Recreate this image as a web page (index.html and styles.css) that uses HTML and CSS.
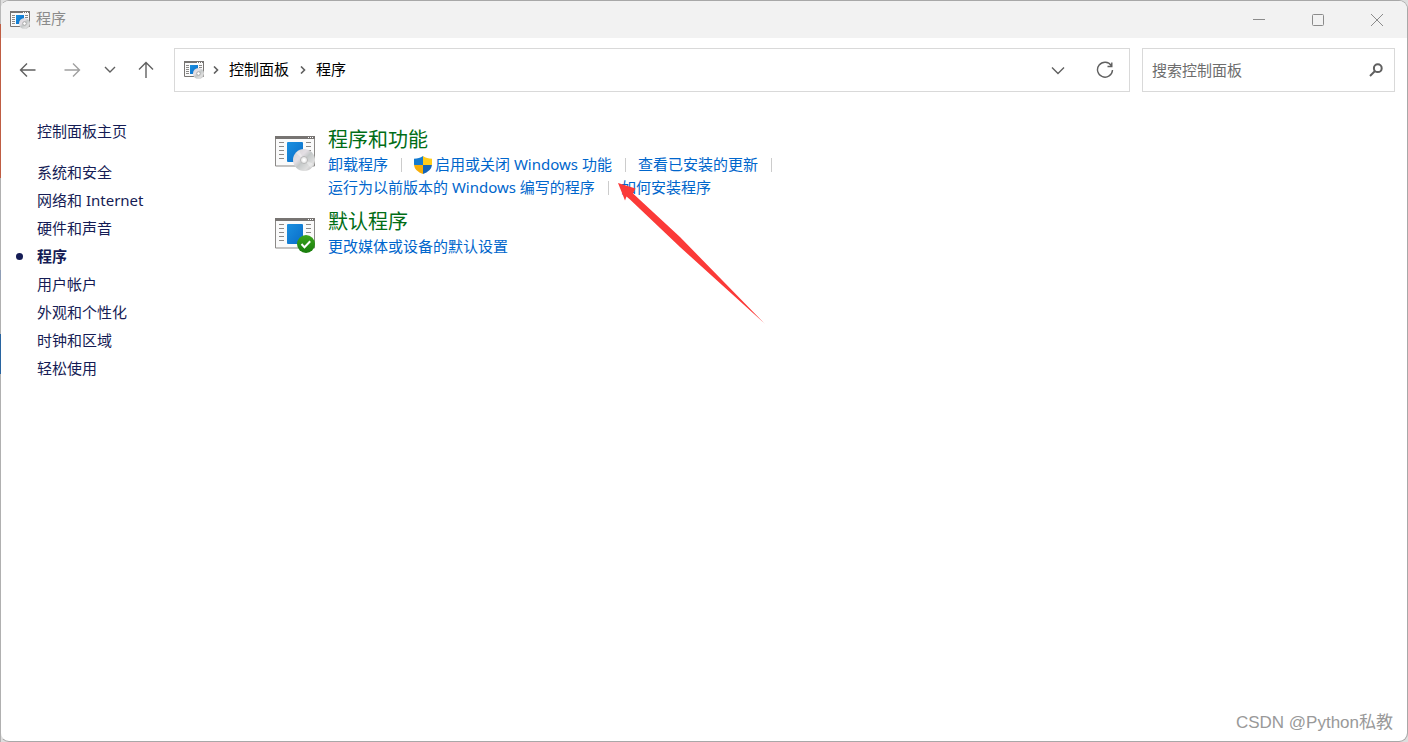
FILE: index.html
```html
<!DOCTYPE html>
<html lang="zh-CN">
<head>
<meta charset="utf-8">
<title>程序</title>
<link rel="stylesheet" href="styles.css">
</head>
<body>
<svg class="defs" aria-hidden="true">
  <defs>
    <linearGradient id="blue" x1="0" y1="0" x2="1" y2="1"><stop offset="0" stop-color="#1a90e0"/><stop offset="1" stop-color="#0a6cc8"/></linearGradient>
    <linearGradient id="disc" x1="0" y1="0" x2="1" y2="1"><stop offset="0" stop-color="#d2d2d2"/><stop offset=".35" stop-color="#e4dfe4"/><stop offset=".5" stop-color="#c4c8c8"/><stop offset=".75" stop-color="#dedede"/><stop offset="1" stop-color="#aaaaaa"/></linearGradient>
    <linearGradient id="green" x1="0" y1="0" x2="0" y2="1"><stop offset="0" stop-color="#3ba51c"/><stop offset="1" stop-color="#187c0c"/></linearGradient>
    <symbol id="panel" viewBox="0 0 40 36">
      <path d="M.5 1.500h39v28.500h-39z" fill="#fafafa" stroke="#8b8987"/>
      <path d="M0 0h40v3H0z" fill="#777472"/>
      <path d="M33 1.500h1M35 1.500h1M37 1.500h1" stroke="#fff"/>
      <path d="M4 6.500h5M4 10.500h5M4 14.500h5M4 18.500h5M4 22.500h5M31 6.500h5M31 10.500h5M31 14.500h5" stroke="#8b8987"/>
      <rect x="12" y="6" width="16" height="20" rx="1" fill="url(#blue)"/>
    </symbol>
    <symbol id="programs" viewBox="0 0 40 36">
      <use href="#panel" width="40" height="36"/>
      <circle cx="29" cy="24" r="11" fill="url(#disc)"/>
      <path d="M29 24 21 17l3-2.500zM29 24l7 8 3-4z" fill="#fff" opacity=".35"/>
      <circle cx="29" cy="24" r="3.500" fill="#eee" stroke="#b5b5b5"/>
      <circle cx="29" cy="24" r="1.500" fill="#fff"/>
    </symbol>
    <symbol id="programs-small" viewBox="0 0 20 18">
      <path d="M.5.500h19v15H.5z" fill="#fafafa" stroke="#777472"/>
      <path d="M0 1h20" stroke="#777472" stroke-width="2"/>
      <path d="M13 1.500h1M15 1.500h1M17 1.500h1" stroke="#fff"/>
      <path d="M2 4.500h3M2 6.500h3M2 8.500h3M2 10.500h3M2 12.500h3M15 4.500h3M15 6.500h3" stroke="#8b8987"/>
      <rect x="6" y="4" width="8" height="9" fill="url(#blue)"/>
      <circle cx="14.500" cy="12.500" r="5.500" fill="url(#disc)"/>
      <circle cx="14.500" cy="12.500" r="1.800" fill="#fff" stroke="#aaa"/>
    </symbol>
    <symbol id="defaults" viewBox="0 0 40 36">
      <use href="#panel" width="40" height="36"/>
      <circle cx="31" cy="26" r="9" fill="url(#green)"/>
      <path d="m26.500 26 3 3.300 5.700-6" fill="none" stroke="#fff" stroke-width="2"/>
    </symbol>
    <symbol id="shield" viewBox="0 0 18 18">
      <clipPath id="shield-clip"><path d="M9 0c2.500 1.800 5.500 2.700 9 2.700V8c0 5-4 8.200-9 10-5-1.800-9-5-9-10V2.700C3.500 2.700 6.500 1.800 9 0z"/></clipPath>
      <g clip-path="url(#shield-clip)">
        <path d="M0 0h9v9H0z" fill="#157bd0"/><path d="M9 0h9v9H9z" fill="#ffcc1c"/>
        <path d="M0 9h9v9H0z" fill="#f8ae08"/><path d="M9 9h9v9H9z" fill="#1464b8"/>
      </g>
    </symbol>
  </defs>
</svg>

<div class="window">
  <header class="titlebar">
    <svg class="icon-small" aria-hidden="true"><use href="#programs-small"/></svg>
    <span class="titlebar-text">程序</span>
    <div class="window-controls">
      <button type="button" aria-label="最小化"><svg viewBox="0 0 14 14"><path d="M1 6.500h12"/></svg></button>
      <button type="button" aria-label="最大化"><svg viewBox="0 0 14 14"><rect x="1.500" y="1.500" width="11" height="11" rx="1"/></svg></button>
      <button type="button" aria-label="关闭"><svg viewBox="0 0 14 14"><path d="m1 1 12 12M13 1 1 13"/></svg></button>
    </div>
  </header>

  <div class="toolbar">
    <nav class="history">
      <button type="button" aria-label="后退"><svg viewBox="0 0 18 18"><path d="M16.500 9H1.500M8 2.500 1.500 9 8 15.500"/></svg></button>
      <button type="button" aria-label="前进" class="dim"><svg viewBox="0 0 18 18"><path d="M1.500 9h15M10 2.500 16.500 9 10 15.500"/></svg></button>
      <button type="button" aria-label="最近的位置" class="recent"><svg viewBox="0 0 18 18"><path d="m4 6 5 5 5-5"/></svg></button>
      <button type="button" aria-label="上移" class="up"><svg viewBox="0 0 18 18"><path d="M9 17V2M2 8.500 9 1.500l7 7"/></svg></button>
    </nav>
    <div class="address">
      <svg class="icon-small" aria-hidden="true"><use href="#programs-small"/></svg>
      <svg class="crumb-arrow" viewBox="0 0 6 8" aria-hidden="true"><path d="m1 .5 3.500 3.500L1 7.500"/></svg>
      <button type="button" class="crumb">控制面板</button>
      <svg class="crumb-arrow" viewBox="0 0 6 8" aria-hidden="true"><path d="m1 .5 3.500 3.500L1 7.500"/></svg>
      <button type="button" class="crumb">程序</button>
      <div class="address-actions">
        <button type="button" aria-label="展开"><svg viewBox="0 0 18 18"><path d="m3 6.500 6 6 6-6"/></svg></button>
        <button type="button" aria-label="刷新"><svg viewBox="0 0 18 18"><path d="M15.300 4.600A7.500 7.500 0 1 0 16.500 9M15.800 1.500v4h-4.300"/></svg></button>
      </div>
    </div>
    <form class="search">
      <input type="search" placeholder="搜索控制面板" aria-label="搜索控制面板">
      <button type="button" aria-label="搜索"><svg viewBox="0 0 14 14"><circle cx="8.800" cy="5.200" r="3.900"/><path d="m6 8-5 5"/></svg></button>
    </form>
  </div>

  <div class="content">
    <nav class="sidebar">
      <a href="#" class="home">控制面板主页</a>
      <a href="#">系统和安全</a>
      <a href="#">网络和 Internet</a>
      <a href="#">硬件和声音</a>
      <a href="#" class="current" aria-current="page">程序</a>
      <a href="#">用户帐户</a>
      <a href="#">外观和个性化</a>
      <a href="#">时钟和区域</a>
      <a href="#">轻松使用</a>
    </nav>
    <main class="categories">
      <section class="category">
        <svg class="icon-large" aria-hidden="true"><use href="#programs"/></svg>
        <div>
          <h2><a href="#">程序和功能</a></h2>
          <ul class="tasks">
            <li class="divided"><a href="#">卸载程序</a></li>
            <li class="divided"><a href="#"><svg class="icon-shield" aria-hidden="true"><use href="#shield"/></svg>启用或关闭 Windows 功能</a></li>
            <li class="divided"><a href="#">查看已安装的更新</a></li>
            <li class="divided"><a href="#">运行为以前版本的 Windows 编写的程序</a></li>
            <li><a href="#">如何安装程序</a></li>
          </ul>
        </div>
      </section>
      <section class="category">
        <svg class="icon-large" aria-hidden="true"><use href="#defaults"/></svg>
        <div>
          <h2><a href="#">默认程序</a></h2>
          <ul class="tasks">
            <li><a href="#">更改媒体或设备的默认设置</a></li>
          </ul>
        </div>
      </section>
      <svg class="pointer" viewBox="0 0 148 142" aria-hidden="true"><path d="M0 0 17.500 5.500 15 10.500 62 54 147 141 62 64 12 16.500 8.500 13.500 7 17.500z"/></svg>
    </main>
  </div>
  <footer class="watermark">CSDN @Python私教</footer>
</div>
</body>
</html>
```

FILE: styles.css
```css
* {
  box-sizing: border-box;
}

body {
  margin: 0;
  background:
    linear-gradient(#b8b8b8 24px, #bf5d43 24px 178px, #b0b0b0 178px 270px, #8f9db5 270px 280px, #b0b0b0 280px 334px, #2864a0 334px 374px, #b0b0b0 374px) left top / 1px 100% no-repeat,
    #dedede;
  color: #000;
  font: 15px/28px "Noto Sans", "Noto Sans CJK SC", sans-serif;
}

a {
  color: inherit;
  text-decoration: none;
}

button {
  display: flex;
  align-items: center;
  justify-content: center;
  padding: 0;
  border: 0;
  background: none;
  color: inherit;
  font: inherit;
}

svg {
  flex: none;
}

button svg,
.crumb-arrow {
  fill: none;
  stroke: currentColor;
}

.defs {
  position: absolute;
  width: 0;
  height: 0;
}

.window {
  display: flex;
  flex-direction: column;
  min-height: 100vh;
  overflow: hidden;
  border: 1px solid #a8a8a8;
  border-left-color: transparent;
  border-radius: 9px;
  background: #fff padding-box;
}

.icon-small {
  width: 20px;
  height: 18px;
}

.titlebar {
  display: flex;
  align-items: center;
  height: 37px;
  padding-left: 9px;
  background: #f2f2f2;
  color: #8b8b8b;
}

.titlebar-text {
  margin-left: 6px;
  padding-bottom: 3px;
}

.window-controls {
  display: flex;
  margin-left: auto;
  padding-right: 1px;
}

.window-controls button {
  width: 59px;
  height: 35px;
}

.window-controls svg {
  width: 14px;
  height: 14px;
}

.toolbar {
  display: flex;
  gap: 12px;
  padding: 10px 12px 0 9px;
  color: #606060;
}

.history {
  display: flex;
  align-items: center;
  gap: 8px;
}

.history button {
  width: 36px;
  height: 36px;
}

.history .recent {
  width: 24px;
}

.history .up {
  width: 32px;
}

.history svg,
.address-actions svg {
  width: 18px;
  height: 18px;
  stroke-width: 1.4;
}

.history .dim {
  color: #a0a0a0;
}

.address,
.search {
  display: flex;
  align-items: center;
  height: 44px;
  border: 1px solid #d9d9d9;
}

.address {
  flex: 1;
  padding: 0 15px 0 9px;
}

.crumb-arrow {
  width: 6px;
  height: 8px;
  margin: 0 10px 0 9px;
  stroke-width: 1.6;
}

.crumb {
  padding: 0 2px 2px 0;
  color: #000;
}

.address-actions {
  display: flex;
  gap: 29px;
  margin-left: auto;
}

.search {
  width: 253px;
  padding: 0 11px 0 9px;
}

.search input {
  flex: 1;
  min-width: 0;
  padding: 0;
  border: 0;
  outline: 0;
  background: none;
  font: inherit;
}

.search input::placeholder {
  color: #6d6d6d;
}

.search svg {
  width: 14px;
  height: 14px;
  stroke-width: 2;
}

.content {
  display: flex;
  flex: 1;
  padding-top: 25px;
}

.sidebar {
  display: flex;
  flex: none;
  flex-direction: column;
  width: 273px;
  padding-left: 36px;
  color: #151c55;
}

.home {
  margin-bottom: 13px;
}

.current {
  position: relative;
  font-weight: 700;
}

.current::before {
  content: "";
  position: absolute;
  top: 11px;
  left: -21px;
  width: 7px;
  height: 7px;
  border-radius: 50%;
  background: #151c55;
}

.categories {
  position: relative;
  flex: 1;
  padding-top: 10px;
}

.category {
  display: flex;
  gap: 13px;
  margin-bottom: 10px;
}

.icon-large {
  width: 40px;
  height: 36px;
  margin: 9px 0 0 1px;
}

h2 {
  margin: 0;
  color: #006d16;
  font-size: 20px;
  font-weight: 400;
  line-height: 26px;
}

.tasks {
  display: flex;
  flex-wrap: wrap;
  max-width: 480px;
  margin: 0;
  padding: 0;
  list-style: none;
  color: #0066cc;
  line-height: 23px;
}

.tasks li,
.tasks a {
  display: flex;
  align-items: center;
}

.divided::after {
  content: "";
  width: 1px;
  height: 14px;
  margin: 0 12px 0 13px;
  background: #cccccc;
}

.icon-shield {
  width: 18px;
  height: 18px;
  margin-right: 3px;
}

.pointer {
  position: absolute;
  top: 66px;
  left: 344px;
  width: 148px;
  height: 142px;
  fill: #fb3a38;
  pointer-events: none;
}

.watermark {
  padding: 0 14px 4px;
  color: #999999;
  font-family: "Liberation Sans", "Noto Sans CJK SC", sans-serif;
  font-size: 17px;
  text-align: right;
}
```
